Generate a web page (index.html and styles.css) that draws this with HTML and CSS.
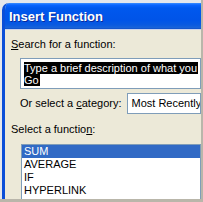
FILE: index.html
```html
<!DOCTYPE html>
<html lang="en">

<head>
    <meta charset="UTF-8">
    <meta name="viewport" content="width=device-width, initial-scale=1.0">
    <title>Insert Function</title>
    <link rel="stylesheet" href="styles.css">
</head>

<body>
    <div class="screen">
        <div class="window">
            <div class="titlebar">Insert Function</div>
            <div class="dialog">
                <div class="label"><u>S</u>earch for a function:</div>
                <div class="searchbox">
                    <div><span class="selected">Type a brief description of what you</span></div>
                    <div><span class="selected">Go</span></div>
                </div>
                <div class="category-row">
                    <span class="label">Or select a <u>c</u>ategory:</span>
                    <div class="combo">Most Recently Used</div>
                </div>
                <div class="label">Select a functio<u>n</u>:</div>
                <div class="listbox">
                    <div class="list-item active">SUM</div>
                    <div class="list-item">AVERAGE</div>
                    <div class="list-item">IF</div>
                    <div class="list-item">HYPERLINK</div>
                </div>
            </div>
        </div>
    </div>
</body>

</html>
```

FILE: styles.css
```css
body {
    margin: 0;
    background-color: #b9b6aa;
    font-family: Tahoma, "Liberation Sans", sans-serif;
    font-size: 11px;
}

.screen {
    width: 201px;
    height: 199px;
    overflow: hidden;
    background-color: #e4e6ec;
    padding: 3px 0 0 2px;
    box-sizing: border-box;
}

.window {
    height: 100%;
    border-left: 3px solid #0a4ed8;
    border-top-left-radius: 7px;
    background-color: #ece9d8;
    overflow: hidden;
}

.titlebar {
    height: 26px;
    line-height: 27px;
    padding-left: 4px;
    color: white;
    font-family: "Liberation Sans", sans-serif;
    font-weight: bold;
    font-size: 13px;
    text-shadow: 1px 1px 0 #0a2a9a;
    background: linear-gradient(#3b8dff 0px, #0a64ff 2px, #0058ee 5px, #0054e8 17px, #0a5ae0 22px, #1b64d8 25px, #0b47c0 26px);
    white-space: nowrap;
}

.dialog {
    padding: 8px 0 0 6px;
    border-top: 1px solid #c9d3ef;
}

.label {
    color: black;
    line-height: 13px;
    white-space: nowrap;
}

.searchbox {
    margin: 7px 0 0 9px;
    height: 26px;
    padding: 3px 0 0 3px;
    background-color: white;
    border: 1px solid #7f9db9;
    white-space: nowrap;
    overflow: hidden;
}

.searchbox>div {
    height: 12px;
}

.selected {
    display: inline-block;
    background-color: black;
    color: white;
    line-height: 12px;
    padding-right: 1px;
}

.category-row {
    display: flex;
    align-items: center;
    margin: 4px 0 0 9px;
    gap: 5px;
}

.combo {
    flex: 1;
    height: 19px;
    line-height: 19px;
    padding-left: 4px;
    background-color: white;
    border: 1px solid #7f9db9;
    white-space: nowrap;
    overflow: hidden;
}

.category-row+.label {
    margin-top: 9px;
}

.listbox {
    margin: 8px 0 0 10px;
    background-color: white;
    border: 1px solid #7f9db9;
    height: 60px;
}

.list-item {
    height: 13px;
    line-height: 13px;
    padding-left: 2px;
}

.list-item.active {
    background-color: #316ac5;
    color: white;
}
```
